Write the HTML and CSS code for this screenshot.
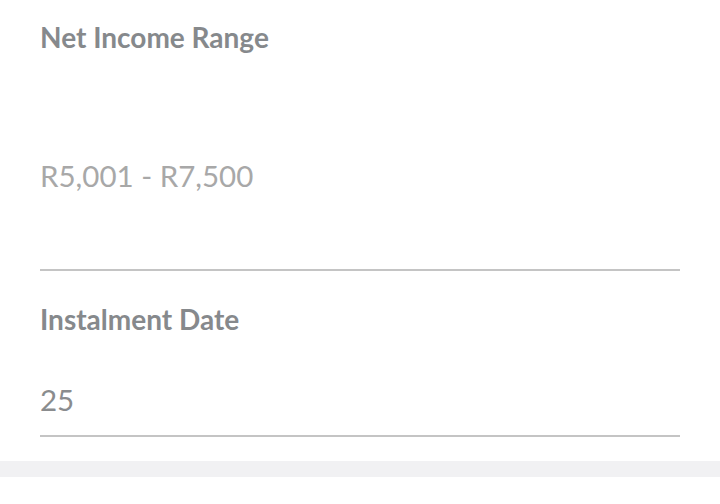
FILE: index.html
```html
<!DOCTYPE html>
<html>
<head>
<meta charset="utf-8">
<link rel="stylesheet" href="styles.css">
</head>
<body>
<div class="form">
  <div class="field field-tall">
    <div class="label">Net Income Range</div>
    <div class="value muted">R5,001 - R7,500</div>
  </div>
  <div class="field">
    <div class="label">Instalment Date</div>
    <div class="value">25</div>
  </div>
</div>
<div class="band"></div>
</body>
</html>
```
FILE: styles.css
```css
html, body {
  margin: 0;
  padding: 0;
  background: #ffffff;
  font-family: Lato, "Liberation Sans", sans-serif;
}
.form {
  padding: 0 40px;
}
.field {
  border-bottom: 2px solid #c4c4c4;
}
.label {
  font-weight: 700;
  font-size: 28px;
  color: #86898c;
  line-height: 32px;
  padding-top: 21px;
}
.field + .field .label {
  padding-top: 32px;
}
.value {
  font-size: 29.5px;
  color: #8a8c8e;
  line-height: 36px;
}
.field-tall .value {
  padding-top: 105px;
  padding-bottom: 75px;
}
.field + .field .value {
  padding-top: 47px;
  padding-bottom: 17px;
}
.value.muted {
  color: #a8a8a8;
}
.band {
  margin-top: 24px;
  height: 16px;
  background: #f1f1f3;
}
```
